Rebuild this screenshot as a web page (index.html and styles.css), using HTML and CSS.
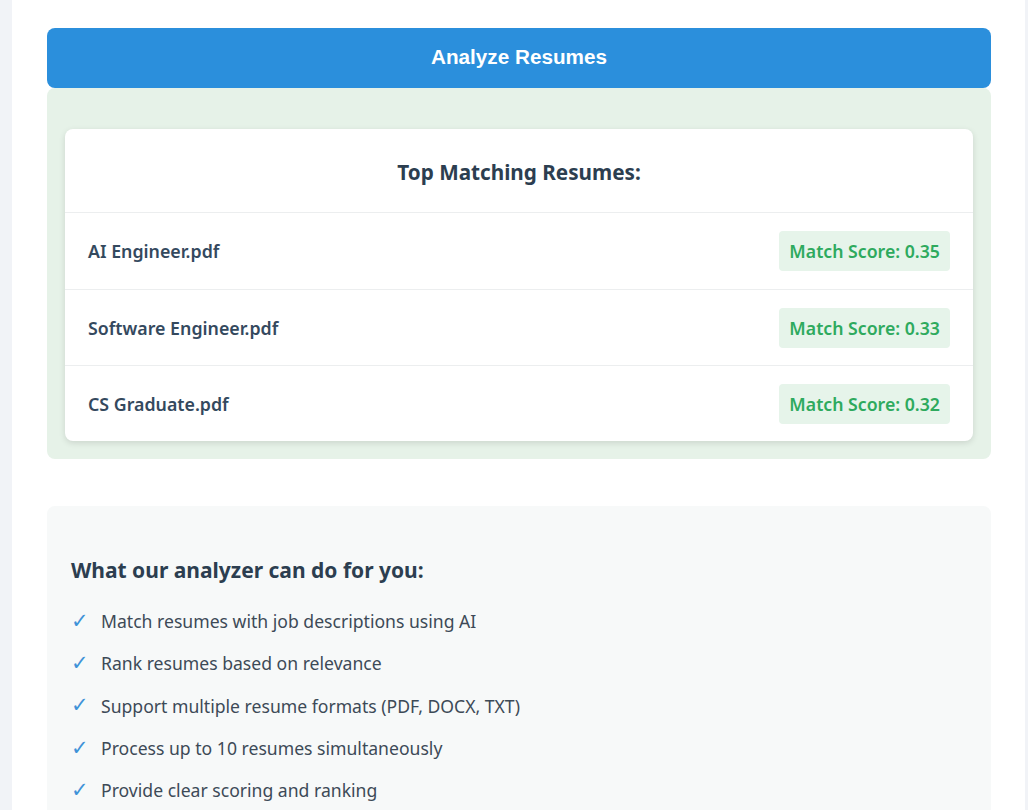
FILE: index.html
```html
<!DOCTYPE html>
<html lang="en">
<head>
<meta charset="utf-8">
<title>Resume Analyzer</title>
<link rel="stylesheet" href="styles.css">
</head>
<body>
<main class="container">
  <button class="analyze-btn">Analyze Resumes</button>
  <section class="results">
    <div class="results-card">
      <h3 class="results-title">Top Matching Resumes:</h3>
      <ul class="result-list">
        <li class="result-row"><span class="file-name">AI Engineer.pdf</span><span class="score">Match Score: 0.35</span></li>
        <li class="result-row"><span class="file-name">Software Engineer.pdf</span><span class="score">Match Score: 0.33</span></li>
        <li class="result-row"><span class="file-name">CS Graduate.pdf</span><span class="score">Match Score: 0.32</span></li>
      </ul>
    </div>
  </section>
  <section class="features">
    <h3 class="features-title">What our analyzer can do for you:</h3>
    <ul class="feature-list">
      <li class="feature"><span class="check">✓</span>Match resumes with job descriptions using AI</li>
      <li class="feature"><span class="check">✓</span>Rank resumes based on relevance</li>
      <li class="feature"><span class="check">✓</span>Support multiple resume formats (PDF, DOCX, TXT)</li>
      <li class="feature"><span class="check">✓</span>Process up to 10 resumes simultaneously</li>
      <li class="feature"><span class="check">✓</span>Provide clear scoring and ranking</li>
    </ul>
  </section>
</main>
</body>
</html>
```

FILE: styles.css
```css
* { box-sizing: border-box; }

html, body {
  margin: 0;
  padding: 0;
  background: #f1f3f7;
  font-family: "Noto Sans", "Open Sans", "DejaVu Sans", sans-serif;
  color: #2c3e50;
}

body {
  height: 810px;
  overflow: hidden;
  padding-left: 12px;
}

.container {
  width: 1013px;
  min-height: 100%;
  background: #ffffff;
  padding: 28px 34px 0 35px;
}

.analyze-btn {
  display: block;
  width: 100%;
  height: 60px;
  padding: 0 0 2px;
  border: none;
  border-radius: 8px;
  background: #2b8fdc;
  color: #ffffff;
  font-family: "Liberation Sans", Arial, sans-serif;
  font-weight: bold;
  font-size: 20.7px;
  cursor: pointer;
}

.results {
  background: #e6f2e8;
  border-radius: 8px;
  padding: 41px 18px 18px;
}

.results-card {
  background: #ffffff;
  border-radius: 8px;
  box-shadow: 0 2px 6px rgba(0, 0, 0, 0.12);
}

.results-title {
  margin: 0;
  height: 84px;
  padding-top: 2px;
  display: flex;
  align-items: center;
  justify-content: center;
  font-size: 20.7px;
  font-weight: 700;
  color: #2c3e50;
  border-bottom: 1px solid #eceeef;
}

.result-list {
  list-style: none;
  margin: 0;
  padding: 0;
}

.result-row {
  display: flex;
  align-items: center;
  justify-content: space-between;
  height: 77px;
  padding: 0 23px;
  border-bottom: 1px solid #eceeef;
}

.result-row:nth-child(2) {
  height: 76px;
}

.result-row:last-child {
  border-bottom: none;
  height: 75px;
}

.file-name {
  font-size: 17.8px;
  font-weight: 600;
  color: #34495e;
}

.score {
  background: #e6f4ea;
  color: #2eaa5e;
  font-size: 17.7px;
  font-weight: 600;
  padding: 0 10px;
  height: 40px;
  line-height: 40px;
  border-radius: 4px;
}

.features {
  margin-top: 47px;
  background: #f7f9f9;
  border-radius: 8px;
  padding: 50px 24px 30px;
  min-height: 320px;
}

.features-title {
  margin: 0 0 16px;
  font-size: 21px;
  font-weight: 700;
  color: #2c3e50;
}

.feature-list {
  list-style: none;
  margin: 0;
  padding: 0;
}

.feature {
  display: flex;
  align-items: center;
  height: 42.3px;
  font-size: 17.6px;
  color: #3d4a57;
}

.check {
  width: 30px;
  color: #3f93d8;
  font-family: "DejaVu Sans", sans-serif;
  font-size: 21px;
  line-height: 1;
}
```
